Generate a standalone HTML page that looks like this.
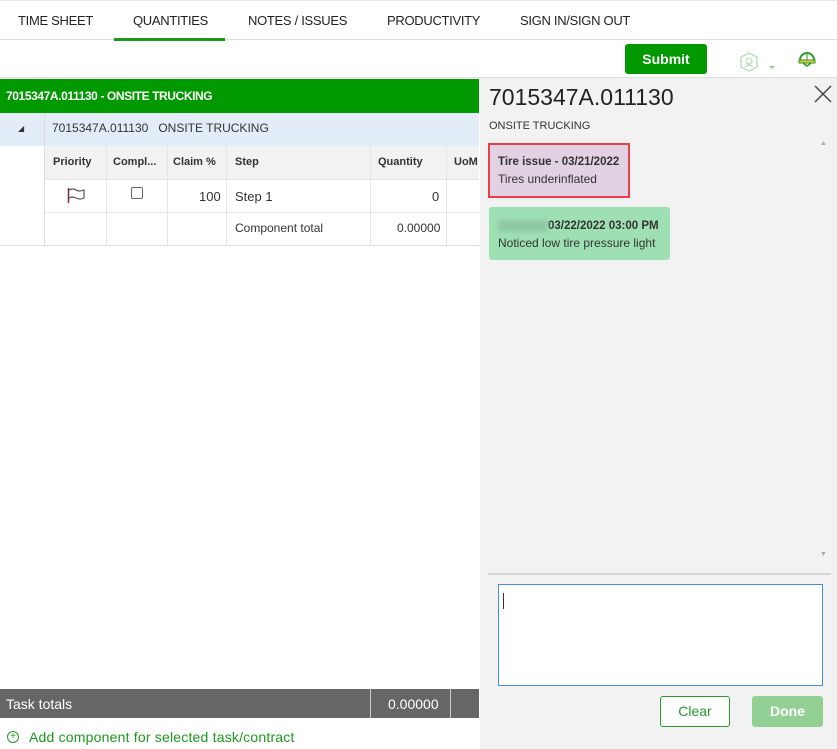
<!DOCTYPE html>
<html><head><meta charset="utf-8"><style>
*{box-sizing:border-box;margin:0;padding:0}
body{width:837px;height:749px;position:relative;overflow:hidden;background:#fff;font-family:"Liberation Sans",sans-serif;color:#333}
.a{position:absolute}
.tab{position:absolute;top:13px;font-size:13px;color:#222;letter-spacing:-0.3px}
.c{position:absolute;font-size:12px;color:#333}
.h{font-size:11px;font-weight:bold}
</style></head><body>
<div class="a" style="left:0;top:0;width:837px;height:1px;background:#e5e5e5"></div>
<div class="tab" style="left:18px">TIME SHEET</div>
<div class="tab" style="left:133px">QUANTITIES</div>
<div class="tab" style="left:248px">NOTES / ISSUES</div>
<div class="tab" style="left:387px">PRODUCTIVITY</div>
<div class="tab" style="left:520px">SIGN IN/SIGN OUT</div>
<div class="a" style="left:0;top:39px;width:837px;height:1px;background:#ddd"></div>
<div class="a" style="left:114px;top:38px;width:111px;height:3px;background:#1a9a1a"></div>
<div class="a" style="left:625px;top:44px;width:82px;height:30px;background:#009900;border-radius:3px;color:#fff;font-weight:bold;font-size:14px;text-align:center;line-height:30px">Submit</div>
<svg class="a" style="left:739px;top:52px" width="40" height="22"><polygon points="10,1 18,5 18,15 10,19 2,15 2,5" fill="none" stroke="#a8dca8" stroke-width="1.2"/><circle cx="10" cy="9" r="3" fill="none" stroke="#a8dca8"/><path d="M6 15q4-4 8 0" fill="none" stroke="#a8dca8"/><path d="M30 14l3 3 3-3z" fill="#8ccc8c"/></svg>
<svg class="a" style="left:797px;top:50px" width="20" height="18"><path d="M3 10a7 7 0 0 1 14 0" fill="#fff" stroke="#2a9a2a" stroke-width="2"/><rect x="2" y="10" width="16" height="3" fill="#e8c53a" stroke="#2a9a2a"/><path d="M6 13l4 3 4-3" fill="none" stroke="#2a9a2a" stroke-width="1.5"/><line x1="10" y1="3" x2="10" y2="10" stroke="#2a9a2a"/></svg>
<div class="a" style="left:0;top:77px;width:837px;height:1px;background:#ddd"></div>
<div class="a" style="left:0;top:79px;width:479px;height:34px;background:#009900;color:#fff;font-weight:bold;font-size:12px;line-height:34px;padding-left:6px;letter-spacing:-0.4px">7015347A.011130 - ONSITE TRUCKING</div>
<div class="a" style="left:0;top:113px;width:479px;height:33px;background:#e3edf7"></div>
<div class="a" style="left:44px;top:113px;width:1px;height:133px;background:#ddd"></div>
<div class="a" style="left:18px;top:124px;font-size:8px;color:#333">◢</div>
<div class="c" style="left:52px;top:121px">7015347A.011130&nbsp;&nbsp; ONSITE TRUCKING</div>
<div class="a" style="left:45px;top:146px;width:434px;height:33px;background:#f2f2f2"></div>
<div class="a" style="left:45px;top:179px;width:434px;height:1px;background:#e5e5e5"></div>
<div class="a" style="left:45px;top:212px;width:434px;height:1px;background:#e5e5e5"></div>
<div class="a" style="left:0;top:245px;width:479px;height:1px;background:#ddd"></div>
<div class="a" style="left:106px;top:146px;width:1px;height:99px;background:#e5e5e5"></div>
<div class="a" style="left:167px;top:146px;width:1px;height:99px;background:#e5e5e5"></div>
<div class="a" style="left:226px;top:146px;width:1px;height:99px;background:#e5e5e5"></div>
<div class="a" style="left:370px;top:146px;width:1px;height:99px;background:#e5e5e5"></div>
<div class="a" style="left:446px;top:146px;width:1px;height:99px;background:#e5e5e5"></div>
<div class="c h" style="left:53px;top:156px">Priority</div>
<div class="c h" style="left:113px;top:156px">Compl...</div>
<div class="c h" style="left:173px;top:156px">Claim %</div>
<div class="c h" style="left:235px;top:156px">Step</div>
<div class="c h" style="left:378px;top:156px">Quantity</div>
<div class="c h" style="left:454px;top:156px">UoM</div>
<svg class="a" style="left:67px;top:187px" width="20" height="17"><line x1="1.5" y1="1" x2="1.5" y2="16" stroke="#7a2a3a" stroke-width="1.5"/><path d="M2 3q4-2 7 0t8 0v8q-4 2-8 0t-7 0" fill="none" stroke="#555" stroke-width="1.2"/></svg>
<div class="a" style="left:131px;top:187px;width:12px;height:12px;border:1px solid #666;border-radius:2px;background:#fff"></div>
<div class="c" style="left:199px;top:189px;font-size:13px">100</div>
<div class="c" style="left:235px;top:189px;font-size:13px">Step 1</div>
<div class="c" style="left:432px;top:189px;font-size:13px">0</div>
<div class="c" style="left:235px;top:221px">Component total</div>
<div class="c" style="left:397px;top:221px">0.00000</div>
<div class="a" style="left:0;top:689px;width:479px;height:29px;background:#666"></div>
<div class="a" style="left:370px;top:689px;width:1px;height:29px;background:#ccc"></div>
<div class="a" style="left:450px;top:689px;width:1px;height:29px;background:#ccc"></div>
<div class="a" style="left:6px;top:696px;color:#fff;font-size:14px">Task totals</div>
<div class="a" style="left:388px;top:696px;color:#fff;font-size:14px">0.00000</div>
<div class="a" style="left:7px;top:731px;width:12px;height:12px;border:1px solid #2a9a2a;border-radius:50%;color:#2a9a2a;font-size:10px;line-height:10px;text-align:center">+</div>
<div class="a" style="left:29px;top:729px;color:#1a9a1a;font-size:14px;letter-spacing:0.2px">Add component for selected task/contract</div>
<div class="a" style="left:480px;top:78px;width:357px;height:671px;background:#f2f2f2"></div>
<div class="a" style="left:489px;top:84px;font-size:23px;color:#222">7015347A.011130</div>
<svg class="a" style="left:814px;top:85px" width="18" height="18"><path d="M1 1L17 17M17 1L1 17" stroke="#444" stroke-width="1.5"/></svg>
<div class="a" style="left:489px;top:120px;font-size:11px;color:#333">ONSITE TRUCKING</div>
<div class="a" style="left:820px;top:140px;font-size:7px;color:#aaa">▲</div>
<div class="a" style="left:820px;top:551px;font-size:7px;color:#aaa">▼</div>
<div class="a" style="left:488px;top:143px;width:142px;height:55px;background:#e2d0e3;border:2px solid #e8404a;padding:9px 0 0 8px;font-size:12px;color:#333"><b style="font-size:11.5px">Tire issue - 03/21/2022</b><div style="margin-top:4px">Tires underinflated</div></div>
<div class="a" style="left:489px;top:207px;width:181px;height:53px;background:#9ee0b4;border-radius:3px;padding:11px 0 0 9px;font-size:12px;color:#333"><span style="display:inline-block;width:50px;height:12px;background:#8fc9a2;filter:blur(2px);vertical-align:middle"></span><b style="font-size:11.5px">03/22/2022 03:00 PM</b><div style="margin-top:4px">Noticed low tire pressure light</div></div>
<div class="a" style="left:488px;top:573px;width:343px;height:2px;background:#d5d5d5"></div>
<div class="a" style="left:498px;top:584px;width:325px;height:102px;background:#fff;border:1px solid #4a90d9"></div>
<div class="a" style="left:503px;top:593px;width:1px;height:16px;background:#333"></div>
<div class="a" style="left:660px;top:696px;width:70px;height:31px;border:1px solid #2a9a2a;border-radius:3px;background:#fff;color:#2a9a2a;font-size:14px;text-align:center;line-height:29px">Clear</div>
<div class="a" style="left:752px;top:696px;width:71px;height:31px;border-radius:3px;background:#93d093;color:#fff;font-weight:bold;font-size:14px;text-align:center;line-height:31px">Done</div>
</body></html>
